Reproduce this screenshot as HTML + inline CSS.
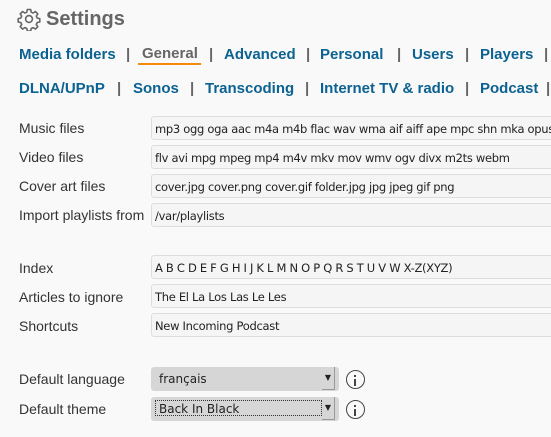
<!DOCTYPE html>
<html><head><meta charset="utf-8"><style>
html,body{margin:0;padding:0;width:551px;height:437px;overflow:hidden;background:#f9f9f9;position:relative;font-family:"Liberation Sans",sans-serif}
.a{position:absolute;white-space:nowrap}
.t{font-size:20px;font-weight:bold;color:#666;top:8px;left:46px}
.n{font-size:15px;font-weight:bold;color:#0c6291}
.s{font-size:15px;font-weight:bold;color:#666}
.l{font-size:14px;color:#333;left:19px}
.i{left:151px;width:420px;height:22px;border:1px solid #ddd;border-radius:3px;background:#f5f5f5;font-family:"DejaVu Sans",sans-serif;font-size:11.5px;letter-spacing:-0.3px;color:#222;line-height:24px;padding-left:3px;box-sizing:content-box}
.sel{left:151px;width:188px;height:24px;background:#d6d6d6;border-radius:3px;font-family:"DejaVu Sans",sans-serif;font-size:12px;color:#222;line-height:24px}
.ic{width:17px;height:17px;border:1.5px solid #444;border-radius:50%;left:346px}
</style></head><body>
<svg class="a" style="left:17px;top:7px" width="24" height="24" viewBox="0 0 24 24" fill="none" stroke="#666" stroke-width="1.6" stroke-linejoin="round"><path d="M10.3 2.5h3.4l.5 2.6 2 .9 2.2-1.5 2.4 2.4-1.5 2.2.9 2 2.6.5v3.4l-2.6.5-.9 2 1.5 2.2-2.4 2.4-2.2-1.5-2 .9-.5 2.6h-3.4l-.5-2.6-2-.9-2.2 1.5-2.4-2.4 1.5-2.2-.9-2-2.6-.5v-3.4l2.6-.5.9-2-1.5-2.2 2.4-2.4 2.2 1.5 2-.9z"/><circle cx="12" cy="12" r="3.4"/></svg>
<div class="a t">Settings</div>

<div class="a n" style="left:19px;top:46px">Media folders</div>
<div class="a s" style="left:126px;top:46px">|</div>
<div class="a s" style="left:142px;top:45px">General</div>
<div class="a" style="left:138px;top:63px;width:63px;height:2px;background:#f58a0a"></div>
<div class="a s" style="left:209px;top:46px">|</div>
<div class="a n" style="left:224px;top:46px">Advanced</div>
<div class="a s" style="left:306px;top:46px">|</div>
<div class="a n" style="left:320px;top:46px">Personal</div>
<div class="a s" style="left:397px;top:46px">|</div>
<div class="a n" style="left:412px;top:46px">Users</div>
<div class="a s" style="left:465px;top:46px">|</div>
<div class="a n" style="left:480px;top:46px">Players</div>
<div class="a s" style="left:544px;top:46px">|</div>

<div class="a n" style="left:19px;top:80px">DLNA/UPnP</div>
<div class="a s" style="left:117px;top:80px">|</div>
<div class="a n" style="left:133px;top:80px">Sonos</div>
<div class="a s" style="left:190px;top:80px">|</div>
<div class="a n" style="left:205px;top:80px">Transcoding</div>
<div class="a s" style="left:305px;top:80px">|</div>
<div class="a n" style="left:320px;top:80px">Internet TV &amp; radio</div>
<div class="a s" style="left:465px;top:80px">|</div>
<div class="a n" style="left:480px;top:80px">Podcast</div>
<div class="a s" style="left:546px;top:80px">|</div>

<div class="a l" style="top:120px">Music files</div>
<div class="a i" style="top:116px">mp3 ogg oga aac m4a m4b flac wav wma aif aiff ape mpc shn mka opus</div>
<div class="a l" style="top:149px">Video files</div>
<div class="a i" style="top:145px">flv avi mpg mpeg mp4 m4v mkv mov wmv ogv divx m2ts webm</div>
<div class="a l" style="top:178px">Cover art files</div>
<div class="a i" style="top:174px">cover.jpg cover.png cover.gif folder.jpg jpg jpeg gif png</div>
<div class="a l" style="top:207px">Import playlists from</div>
<div class="a i" style="top:203px">/var/playlists</div>

<div class="a l" style="top:260px">Index</div>
<div class="a i" style="top:255px">A B C D E F G H I J K L M N O P Q R S T U V W X-Z(XYZ)</div>
<div class="a l" style="top:289px">Articles to ignore</div>
<div class="a i" style="top:284px">The El La Los Las Le Les</div>
<div class="a l" style="top:318px">Shortcuts</div>
<div class="a i" style="top:313px">New Incoming Podcast</div>

<div class="a l" style="top:371px">Default language</div>
<div class="a sel" style="top:367px"><span style="margin-left:8px">français</span><span style="position:absolute;right:4px;top:0;width:12px;height:22px;border-right:1px solid #999;border-bottom:1px solid #999;font-size:8px;line-height:22px;text-align:center">▼</span></div>
<div class="a ic" style="top:370px"></div>
<div class="a" style="left:354px;top:375px;width:2px;height:2px;background:#444"></div>
<div class="a" style="left:354px;top:379px;width:2px;height:7px;background:#444"></div>
<div class="a l" style="top:401px">Default theme</div>
<div class="a sel" style="top:397px"><span style="position:absolute;left:4px;top:3px;width:167px;height:16px;border:1px dotted #333;line-height:16px;padding-left:3px;box-sizing:border-box">Back In Black</span><span style="position:absolute;right:4px;top:0;width:12px;height:22px;border-right:1px solid #999;border-bottom:1px solid #999;font-size:8px;line-height:22px;text-align:center">▼</span></div>
<div class="a ic" style="top:400px"></div>
<div class="a" style="left:354px;top:405px;width:2px;height:2px;background:#444"></div>
<div class="a" style="left:354px;top:409px;width:2px;height:7px;background:#444"></div>
</body></html>
